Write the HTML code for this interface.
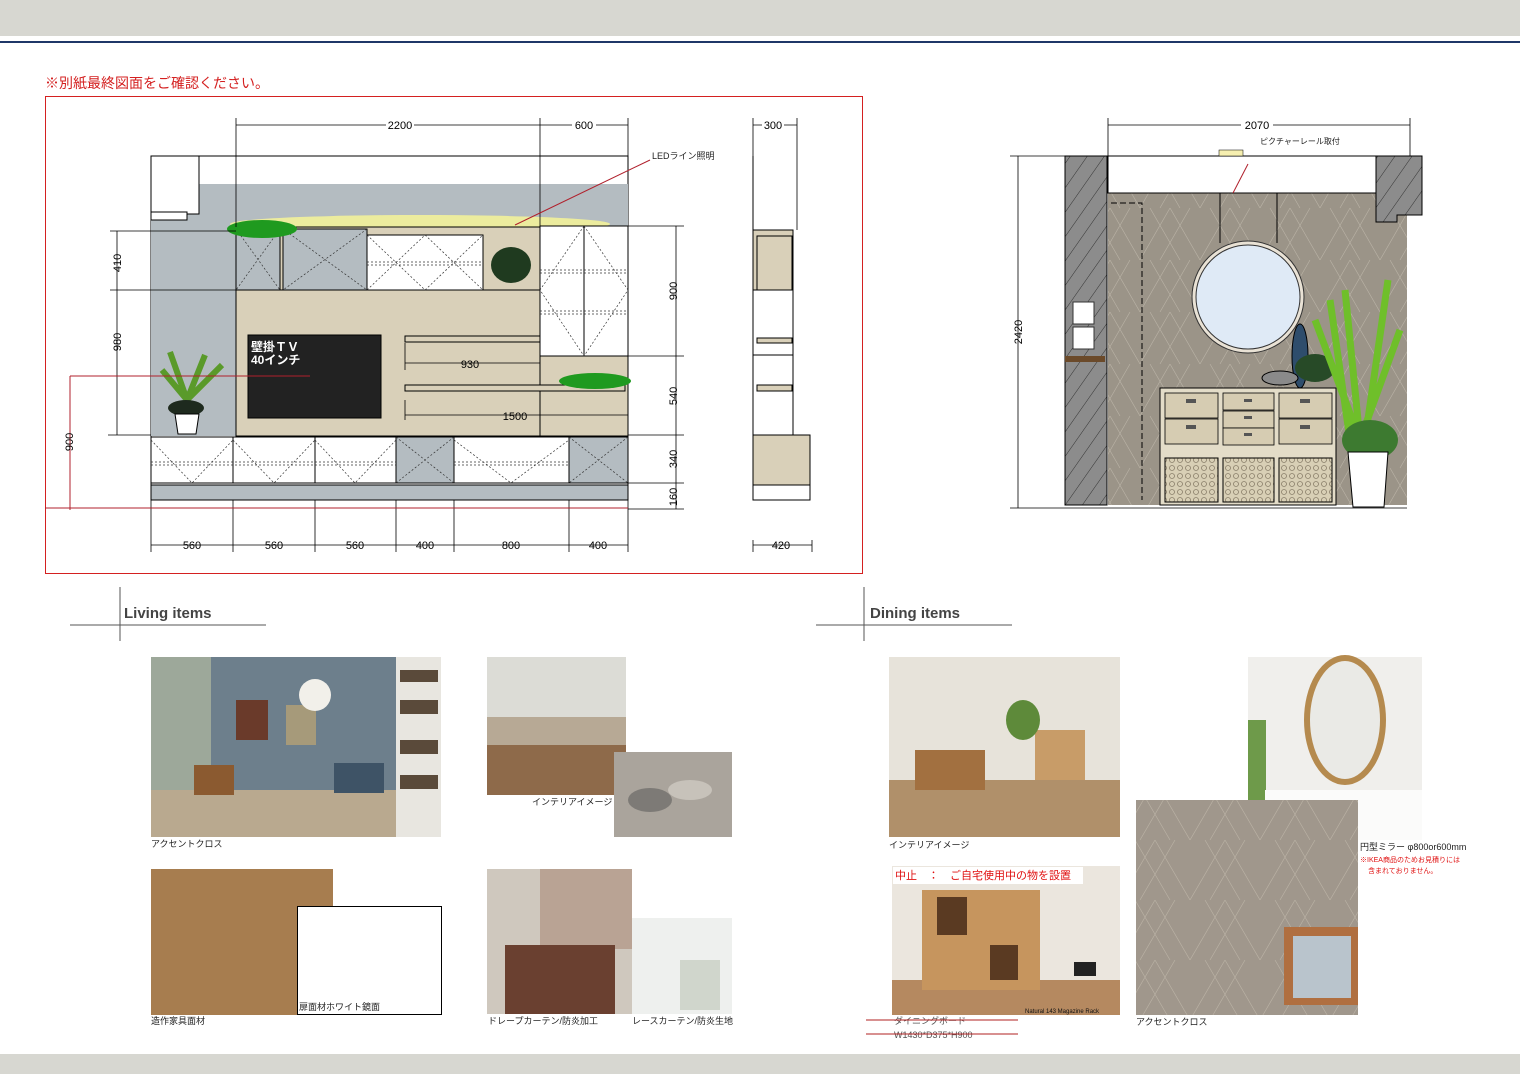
<!DOCTYPE html>
<html><head><meta charset="utf-8"><style>
html,body{margin:0;padding:0;background:#fff}
svg{display:block}
text{font-family:"Liberation Sans","Noto Sans CJK JP",sans-serif}
</style></head><body>
<svg width="1520" height="1074" viewBox="0 0 1520 1074" xmlns="http://www.w3.org/2000/svg">
<defs>
<pattern id="hatch" width="14" height="14" patternUnits="userSpaceOnUse" patternTransform="rotate(35)">
<rect width="14" height="14" fill="#8c8c8c"/><line x1="0" y1="0" x2="0" y2="14" stroke="#333" stroke-width="1"/></pattern>
<pattern id="tri" width="60" height="52" patternUnits="userSpaceOnUse">
<rect width="60" height="52" fill="#9b9488"/><path d="M0 52 L30 0 L60 52 M10 0 L40 52 M50 0 L20 52" stroke="#cfc8bb" stroke-width="0.6" stroke-opacity="0.6" fill="none"/></pattern>
<pattern id="tri2" width="70" height="60" patternUnits="userSpaceOnUse">
<rect width="70" height="60" fill="#a0978c"/><path d="M0 60 L35 0 L70 60 M15 0 L50 60 M55 0 L20 60" stroke="#cfc6b8" stroke-width="0.6" stroke-opacity="0.6" fill="none"/></pattern>
<pattern id="mesh" width="8" height="8" patternUnits="userSpaceOnUse">
<rect width="8" height="8" fill="#d8cfb5"/><circle cx="4" cy="4" r="2.5" fill="none" stroke="#8a7f6a" stroke-width="0.8"/></pattern>
</defs>
<rect x="0" y="0" width="1520" height="36" fill="#d7d7d1"/>
<rect x="0" y="41" width="1520" height="2" fill="#1f3768"/>
<rect x="0" y="1054" width="1520" height="20" fill="#d7d7d1"/>

<text x="45" y="88" font-size="14" fill="#d42020">※別紙最終図面をご確認ください。</text>
<rect x="45.5" y="96.5" width="817" height="477" fill="none" stroke="#d42020" stroke-width="1"/>

<g stroke="#000" stroke-width="1">
<rect x="151" y="156" width="477" height="344" fill="#fff"/>
<rect x="151" y="184" width="477" height="252" fill="#b4bcc1" stroke="none"/>
<rect x="151" y="156" width="48" height="58" fill="#fff"/>
<rect x="151" y="212" width="36" height="8" fill="#fff"/>
<ellipse cx="420" cy="224" rx="190" ry="9" fill="#f2f19a" stroke="none" opacity="0.9"/>
<rect x="236" y="227" width="305" height="63" fill="#d9d0b9"/>
<rect x="236" y="229" width="44" height="61" fill="#b4bcc1"/>
<rect x="283" y="229" width="84" height="61" fill="#b4bcc1"/>
<rect x="367" y="235" width="116" height="55" fill="#fff"/>
<rect x="236" y="290" width="305" height="146" fill="#d9d0b9"/>
<rect x="540" y="226" width="88" height="130" fill="#fff"/>
<line x1="584" y1="226" x2="584" y2="356"/>
<rect x="540" y="356" width="88" height="80" fill="#d9d0b9"/>
<rect x="248" y="335" width="133" height="83" fill="#222"/>
<rect x="405" y="336" width="135" height="6" fill="#d9d0b9"/>
<rect x="405" y="385" width="220" height="6" fill="#d9d0b9"/>
<rect x="151" y="437" width="477" height="46" fill="#b4bcc1"/>
<rect x="151" y="437" width="82" height="46" fill="#fff"/>
<rect x="233" y="437" width="82" height="46" fill="#fff"/>
<rect x="315" y="437" width="81" height="46" fill="#fff"/>
<rect x="454" y="437" width="115" height="46" fill="#fff"/>
<rect x="151" y="485" width="477" height="15" fill="#b4bcc1"/>
</g>
<g stroke="#333" stroke-width="0.7" stroke-dasharray="2,2" fill="none">
<path d="M236 229 L280 290 M280 229 L236 290 M283 229 L367 290 M367 229 L283 290 M367 235 L425 290 L483 235 M367 290 L425 235 L483 290"/>
<path d="M584 226 L540 290 L584 356 M584 226 L628 290 L584 356"/>
<path d="M151 440 L192 483 L233 440 M233 440 L274 483 L315 440 M315 440 L355 483 L396 440 M396 437 L454 483 M454 437 L396 483 M454 440 L511 483 L569 440 M569 437 L628 483 M628 437 L569 483"/>
<path d="M367 262 H483 M367 265 H483 M151 462 H396 M151 465 H396 M454 462 H569 M454 465 H569 M540 270 H628 M540 273 H628 M540 311 H628 M540 314 H628"/>
</g>
<text x="251" y="351" font-size="12" font-weight="bold" fill="#fff">壁掛ＴＶ</text>
<text x="251" y="364" font-size="12" font-weight="bold" fill="#fff">40インチ</text>
<ellipse cx="262" cy="229" rx="35" ry="9" fill="#1f9a1f"/>
<ellipse cx="595" cy="381" rx="36" ry="8" fill="#1f9a1f"/>
<ellipse cx="511" cy="265" rx="20" ry="18" fill="#1f3a1f"/>
<path d="M187 400 L170 352 M187 400 L205 355 M187 400 L222 365 M187 400 L162 370" stroke="#5a9a2a" stroke-width="6"/>
<ellipse cx="186" cy="408" rx="18" ry="8" fill="#1e2a1e"/>
<path d="M175 414 H199 L196 434 H178 Z" fill="#fff" stroke="#000"/>
<g stroke="#000" stroke-width="0.8" fill="none">
<path d="M236 125 H628 M236 118 V227 M540 118 V227 M628 118 V156"/>
<path d="M110 231 H236 M110 290 H236 M117 231 V435 M108 435 H151"/>
<path d="M628 226 H684 M628 356 H684 M628 435 H684 M628 483 H684 M628 509 H684 M676 226 V509"/>
<path d="M151 545 H628 M151 500 V552 M233 500 V552 M315 500 V552 M396 500 V552 M454 500 V552 M569 500 V552 M628 500 V552"/>
<path d="M405 363 H540 M405 343 V370 M405 400 V420 M405 415 H628"/>
<path d="M753 125 H797 M753 118 V230 M797 118 V230 M753 545 H812 M753 540 V552 M812 540 V552"/>
</g>
<g stroke="#b0202c" stroke-width="1" fill="none">
<path d="M70 376 H310 M70 376 V510 M45 508 H628 M515 225 L650 160"/>
</g>
<g font-size="11" fill="#000" text-anchor="middle">
<rect x="386" y="118" width="28" height="13" fill="#fff"/><text x="400" y="129">2200</text>
<rect x="572" y="118" width="24" height="13" fill="#fff"/><text x="584" y="129">600</text>
<rect x="762" y="118" width="22" height="13" fill="#fff"/><text x="773" y="129">300</text>
<text x="470" y="368">930</text><text x="515" y="420">1500</text>
<text x="192" y="549">560</text><text x="274" y="549">560</text><text x="355" y="549">560</text><text x="425" y="549">400</text><text x="511" y="549">800</text><text x="598" y="549">400</text><text x="781" y="549">420</text>
<text transform="translate(121,263) rotate(-90)">410</text>
<text transform="translate(121,342) rotate(-90)">980</text>
<text transform="translate(73,442) rotate(-90)">900</text>
<text transform="translate(677,291) rotate(-90)">900</text>
<text transform="translate(677,396) rotate(-90)">540</text>
<text transform="translate(677,459) rotate(-90)">340</text>
<text transform="translate(677,497) rotate(-90)">160</text>
</g>
<text x="652" y="159" font-size="9" fill="#222">LEDライン照明</text>
<g stroke="#000" stroke-width="1">
<rect x="753" y="230" width="40" height="60" fill="#d9d0b9"/>
<rect x="757" y="236" width="35" height="54" fill="#d9d0b9"/>
<rect x="753" y="290" width="40" height="65" fill="#fff"/>
<rect x="757" y="338" width="35" height="5" fill="#d9d0b9"/>
<rect x="753" y="355" width="40" height="80" fill="#fff"/>
<rect x="757" y="385" width="35" height="6" fill="#d9d0b9"/>
<rect x="753" y="435" width="57" height="50" fill="#d9d0b9"/>
<rect x="753" y="485" width="57" height="15" fill="#fff"/>
<line x1="753" y1="156" x2="753" y2="500"/>
</g>

<rect x="1108" y="193" width="299" height="312" fill="url(#tri)"/>
<rect x="1065" y="156" width="42" height="349" fill="url(#hatch)" stroke="#000"/>
<rect x="1108" y="156" width="268" height="37" fill="#fff" stroke="#000"/>
<path d="M1376 156 H1422 V215 H1397 V222 H1376 Z" fill="url(#hatch)" stroke="#000"/>
<rect x="1219" y="150" width="24" height="6" fill="#f6efb0" stroke="#000" stroke-width="0.5"/>
<path d="M1111 203 H1142 V500" stroke="#000" stroke-dasharray="6,3" fill="none"/>
<rect x="1073" y="302" width="21" height="22" fill="#fff" stroke="#333"/>
<rect x="1073" y="327" width="21" height="22" fill="#fff" stroke="#333"/>
<rect x="1065" y="356" width="40" height="6" fill="#6b4a2a"/>
<path d="M1220 193 V243 M1277 193 V243" stroke="#000"/>
<circle cx="1248" cy="297" r="56" fill="#e9e2d5" stroke="#333"/>
<circle cx="1248" cy="297" r="52" fill="#dfeaf6" stroke="#333"/>
<ellipse cx="1300" cy="356" rx="8" ry="32" fill="#2e4d6c" stroke="#000"/>
<ellipse cx="1280" cy="378" rx="18" ry="7" fill="#8a8a8a" stroke="#000"/>
<ellipse cx="1315" cy="368" rx="20" ry="14" fill="#274a27"/>
<rect x="1160" y="388" width="176" height="117" fill="#e3dcc8" stroke="#000"/>
<g fill="#d6ccb2" stroke="#000" stroke-width="0.8">
<rect x="1165" y="393" width="53" height="25"/><rect x="1165" y="419" width="53" height="25"/>
<rect x="1223" y="393" width="51" height="17"/><rect x="1223" y="411" width="51" height="17"/><rect x="1223" y="428" width="51" height="17"/>
<rect x="1279" y="393" width="53" height="25"/><rect x="1279" y="419" width="53" height="25"/>
</g>
<g fill="#555"><rect x="1186" y="399" width="10" height="4"/><rect x="1186" y="425" width="10" height="4"/><rect x="1244" y="399" width="8" height="3"/><rect x="1244" y="416" width="8" height="3"/><rect x="1244" y="433" width="8" height="3"/><rect x="1300" y="399" width="10" height="4"/><rect x="1300" y="425" width="10" height="4"/></g>
<rect x="1165" y="458" width="53" height="44" fill="url(#mesh)" stroke="#000"/>
<rect x="1223" y="458" width="51" height="44" fill="url(#mesh)" stroke="#000"/>
<rect x="1279" y="458" width="53" height="44" fill="url(#mesh)" stroke="#000"/>
<path d="M1350 440 L1330 300 M1360 440 L1345 290 M1365 440 L1388 280 M1360 440 L1400 330 M1360 440 L1315 320" stroke="#6fbf2a" stroke-width="7"/>
<ellipse cx="1370" cy="440" rx="28" ry="20" fill="#3d7a30"/>
<path d="M1348 452 H1388 L1384 507 H1353 Z" fill="#fff" stroke="#000"/>
<g stroke="#000" stroke-width="0.8" fill="none">
<path d="M1108 125 H1410 M1108 118 V156 M1410 118 V156 M1010 156 H1065 M1010 508 H1407 M1018 156 V508"/>
</g>
<path d="M1248 164 L1233 193" stroke="#b0202c"/>
<rect x="1241" y="118" width="32" height="13" fill="#fff"/>
<text x="1257" y="129" font-size="11" text-anchor="middle">2070</text>
<text transform="translate(1022,332) rotate(-90)" font-size="11" text-anchor="middle">2420</text>
<text x="1260" y="144" font-size="8" fill="#222">ピクチャーレール取付</text>

<g stroke="#555" stroke-width="1">
<path d="M70 625 H266 M120 587 V641"/>
<path d="M816 625 H1012 M864 587 V641"/>
</g>
<text x="124" y="618" font-size="15" font-weight="bold" fill="#444">Living items</text>
<text x="870" y="618" font-size="15" font-weight="bold" fill="#444">Dining items</text>

<rect x="151" y="657" width="290" height="180" fill="#6d7f8c"/>
<rect x="151" y="657" width="60" height="180" fill="#9da89a"/>
<rect x="396" y="657" width="45" height="180" fill="#e8e6e0"/>
<g fill="#5a4a3a"><rect x="400" y="670" width="38" height="12"/><rect x="400" y="700" width="38" height="14"/><rect x="400" y="740" width="38" height="14"/><rect x="400" y="775" width="38" height="14"/></g>
<rect x="151" y="790" width="245" height="47" fill="#b9a98f"/>
<rect x="236" y="700" width="32" height="40" fill="#6a3a2a"/>
<rect x="286" y="705" width="30" height="40" fill="#a69a7a"/>
<circle cx="315" cy="695" r="16" fill="#f2f0ea"/>
<rect x="194" y="765" width="40" height="30" fill="#8b5a30"/>
<rect x="334" y="763" width="50" height="30" fill="#3e5366"/>
<text x="151" y="847" font-size="9" fill="#222">アクセントクロス</text>

<rect x="487" y="657" width="139" height="138" fill="#b7a995"/>
<rect x="487" y="657" width="139" height="60" fill="#dcdcd6"/>
<rect x="487" y="745" width="139" height="50" fill="#8e6a4a"/>
<rect x="614" y="752" width="118" height="85" fill="#aaa49c"/>
<ellipse cx="650" cy="800" rx="22" ry="12" fill="#7d7a76"/>
<ellipse cx="690" cy="790" rx="22" ry="10" fill="#c7c2ba"/>
<text x="532" y="805" font-size="9" fill="#222">インテリアイメージ</text>

<rect x="151" y="869" width="182" height="146" fill="#a77d4f"/>
<rect x="297.5" y="906.5" width="144" height="108" fill="#fff" stroke="#000"/>
<text x="299" y="1010" font-size="9" fill="#222">扉面材ホワイト鏡面</text>
<text x="151" y="1024" font-size="9" fill="#222">造作家具面材</text>

<rect x="487" y="869" width="145" height="145" fill="#cfc8be"/>
<rect x="540" y="869" width="92" height="80" fill="#b9a394"/>
<rect x="505" y="945" width="110" height="69" fill="#6a4030"/>
<rect x="632" y="918" width="100" height="96" fill="#eef0ee"/>
<rect x="680" y="960" width="40" height="50" fill="#d0d6cc"/>
<text x="488" y="1024" font-size="9" fill="#222">ドレープカーテン/防炎加工</text>
<text x="632" y="1024" font-size="9" fill="#222">レースカーテン/防炎生地</text>

<rect x="889" y="657" width="231" height="180" fill="#e7e3da"/>
<rect x="889" y="780" width="231" height="57" fill="#b0906a"/>
<rect x="1035" y="730" width="50" height="50" fill="#c89c68"/>
<rect x="915" y="750" width="70" height="40" fill="#a27040"/>
<ellipse cx="1023" cy="720" rx="17" ry="20" fill="#5e8a3a"/>
<text x="889" y="848" font-size="9" fill="#222">インテリアイメージ</text>

<rect x="892" y="866" width="228" height="149" fill="#ebe6de"/>
<rect x="892" y="980" width="228" height="35" fill="#b58960"/>
<rect x="922" y="890" width="118" height="100" fill="#c6955e"/>
<rect x="937" y="897" width="30" height="38" fill="#5a3a22"/>
<rect x="990" y="945" width="28" height="35" fill="#5a3a22"/>
<rect x="1074" y="962" width="22" height="14" fill="#222"/>
<rect x="893" y="867" width="190" height="17" fill="#fff"/>
<text x="895" y="879" font-size="11" fill="#e01010">中止　：　ご自宅使用中の物を設置</text>
<text x="1025" y="1013" font-size="6" fill="#111">Natural 143 Magazine Rack</text>
<text x="894" y="1024" font-size="9" fill="#555">ダイニングボード</text>
<text x="894" y="1038" font-size="9" fill="#555">W1430*D375*H900</text>
<path d="M866 1020 H1018 M866 1034 H1018" stroke="#b02020"/>

<rect x="1248" y="657" width="174" height="183" fill="#f0efec"/>
<rect x="1248" y="720" width="18" height="80" fill="#6e9a4a"/>
<ellipse cx="1345" cy="720" rx="38" ry="62" fill="#eaeae6" stroke="#b58a4e" stroke-width="6"/>
<rect x="1265" y="790" width="157" height="50" fill="#fbfbfa"/>
<rect x="1136" y="800" width="222" height="215" fill="url(#tri2)"/>
<rect x="1284" y="927" width="74" height="78" fill="#b06f40"/>
<rect x="1293" y="936" width="58" height="62" fill="#b9c4cc"/>
<text x="1360" y="850" font-size="9" fill="#222">円型ミラー φ800or600mm</text>
<text x="1360" y="862" font-size="7" fill="#e01010">※IKEA商品のためお見積りには</text>
<text x="1368" y="873" font-size="7" fill="#e01010">含まれておりません。</text>
<text x="1136" y="1025" font-size="9" fill="#222">アクセントクロス</text>
</svg>
</body></html>
